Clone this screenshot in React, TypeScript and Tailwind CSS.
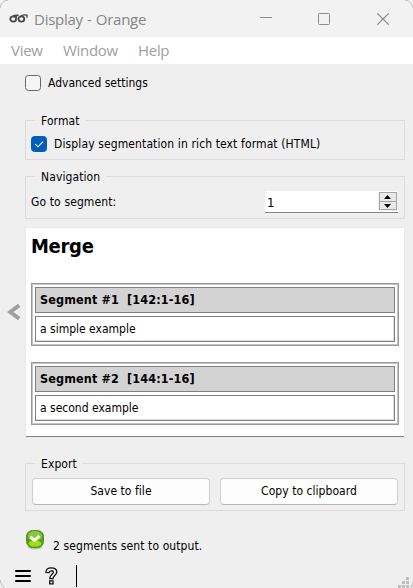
import type { ReactNode } from "react";

function TitleBar() {
  return (
    <header className="flex h-[37px] shrink-0 items-center bg-[#f2f2f2] pl-[9px] pr-[24px]">
      <svg width="20" height="12" viewBox="0 0 20 12" fill="none" stroke="#4a4a4a" strokeWidth="1.8">
        <ellipse cx="4.2" cy="6" rx="2.9" ry="2.7" />
        <ellipse cx="12.4" cy="6" rx="2.9" ry="2.7" />
        <path d="M4 2.9C6 1.9 8 2.4 9.6 2.2M12 2.9C14 1.9 16 1.6 18.6 2.2M18 2.2V4.8M7.4 3V5" strokeWidth="1.4" />
      </svg>
      <h1 className="ml-[5px] w-[112px] whitespace-nowrap font-['Open_Sans',sans-serif] text-[15px] leading-5 tracking-[-0.25px] [word-spacing:0.5px] text-[#858585]">Display - Orange</h1>
      <div className="ml-auto flex items-center">
        <svg width="12" height="12" stroke="#8c8c8c"><path d="M0 4.5H12" /></svg>
        <svg className="ml-[46px]" width="12" height="12" fill="none" stroke="#8c8c8c"><rect x=".5" y=".5" width="11" height="11" rx=".8" /></svg>
        <svg className="ml-[47px]" width="12" height="12" fill="none" stroke="#858585" strokeWidth="1.1"><path d="M.3.3 11.7 11.7M11.7.3.3 11.7" /></svg>
      </div>
    </header>
  );
}

function MenuBar() {
  return (
    <nav className="flex h-[27px] shrink-0 items-center bg-white pl-[11px] font-['Open_Sans',sans-serif] text-[15px] tracking-[-0.3px] text-[#a0a0a0]">
      <span className="w-[52px]">View</span>
      <span className="w-[75px]">Window</span>
      <span>Help</span>
    </nav>
  );
}

function CheckBox({ checked }: { checked?: boolean }) {
  return (
    <svg className="shrink-0" width="16" height="16" fill="none">
      <rect x=".5" y=".5" width="15" height="15" rx="3" fill={checked ? "#005fb8" : "#f5f5f5"} stroke={checked ? "#005fb8" : "#666"} />
      {checked && <path d="M4.3 8.2 7 10.8 12 5.7" stroke="#fff" strokeWidth="1.1" />}
    </svg>
  );
}

function Group({ title, className, children }: { title: string; className: string; children: ReactNode }) {
  return (
    <section className={`flex w-[380px] shrink-0 border border-[#dcdcdc] ${className}`}>
      <h2 className="-mt-[8px] ml-[9px] h-4 w-0 whitespace-nowrap leading-4 tracking-[0.1px]">
        <span className="inline-block bg-[#efefef] px-[6px]">{title}</span>
      </h2>
      <div className="-ml-[9px] flex w-[378px] min-w-0">{children}</div>
    </section>
  );
}

function Segment({ title, text }: { title: string; text: string }) {
  return (
    <article className="flex h-[63px] w-[368px] flex-col gap-[3px] border border-[#999] p-[3px] shadow-[inset_0_0_0_1px_#c4c4c4]">
      <h4 className="h-[26px] whitespace-pre border border-[#808080] bg-[#d3d3d3] pl-1 text-[12.5px] font-bold leading-[24px] tracking-[0.13px]">{title}</h4>
      <p className="h-[26px] border border-[#808080] pl-1 leading-[24px] shadow-[inset_-1px_-1px_0_#dedede]">{text}</p>
    </article>
  );
}

function SpinBox() {
  return (
    <div className="ml-auto mr-[6px] mt-[14px] flex h-[22px] w-[133px] border-b border-[#858585] bg-white pl-[2px] text-[13px] leading-[23px]">
      <span>1</span>
      <svg className="ml-auto mt-px" width="20" height="19" viewBox="0 0 20 19">
        <path d="M0-1H20V20H0Z" fill="#f2f2f2" />
        <g fill="#e9e9e9" stroke="#a5a5a5"><rect x="1.5" y=".5" width="17" height="9" /><rect x="1.5" y="9.5" width="17" height="8" /></g>
        <path d="M6 7 9.5 3 13 7ZM6 12 9.5 16 13 12Z" fill="#000" />
      </svg>
    </div>
  );
}

function PushButton({ children }: { children: ReactNode }) {
  return <button className="h-[27px] w-[178px] rounded-[4px] border border-[#d0d0d0] border-b-[#b8b8b8] bg-[#fdfdfd] leading-[25px] tracking-[0.05px]">{children}</button>;
}

export default function App() {
  return (
    <div className="relative flex h-[588px] w-[413px] flex-col overflow-hidden bg-[#efefef] font-['DejaVu_Sans_Condensed','DejaVu_Sans',sans-serif] text-[12px] text-black">
      <TitleBar />
      <MenuBar />
      <div className="flex h-[458px] shrink-0">
        <aside className="flex w-[25px] shrink-0 items-start pl-[7px] pt-[239px]">
          <svg width="14" height="18" fill="none" stroke="#a0a0a0" strokeWidth="4"><path d="M12.2 2.3 3.2 9 12.2 15.7" /></svg>
        </aside>
        <main className="flex flex-col pt-[11px]">
          <label className="flex h-4 items-center gap-[7px]">
            <CheckBox />
            <span>Advanced settings</span>
          </label>
          <Group title="Format" className="mt-[29px] h-[40px]">
            <label className="flex items-start gap-[7px] pl-[5px] pt-[15px] leading-4"><CheckBox checked /><span className="tracking-[0.12px]">Display segmentation in rich text format (HTML)</span></label>
          </Group>
          <Group title="Navigation" className="mt-[16px] h-[43px]">
            <span className="pl-[5px] pt-[16px] leading-[18px] tracking-[0.12px]">Go to segment:</span>
            <SpinBox />
          </Group>
          <section className="ml-px mt-[9px] h-[209px] w-[378px] border-b border-[#858585] bg-white pl-[5px] shadow-[0_0_0_1px_#e9e9e9]">
            <h3 className="h-[55px] pt-[5px] text-[20px] font-bold leading-[26px] tracking-[-0.3px]">Merge</h3>
            <div className="flex flex-col gap-4">
              <Segment title="Segment #1  [142:1-16]" text="a simple example" />
              <Segment title="Segment #2  [144:1-16]" text="a second example" />
            </div>
          </section>
          <Group title="Export" className="mt-[26px] h-[48px]">
            <div className="flex gap-[10px] pl-[6px] pt-[14px]">
              <PushButton>Save to file</PushButton>
              <PushButton>Copy to clipboard</PushButton>
            </div>
          </Group>
        </main>
      </div>
      <div className="flex h-[43px] shrink-0 pl-[26px] pt-[8px]">
        <svg width="18" height="20" viewBox="0 0 18 20">
          <ellipse cx="9" cy="17" rx="7" ry="2.5" fill="#bbb" />
          <rect x=".5" y=".5" width="17" height="17" rx="6" fill="#55a016" stroke="#539127" />
          <ellipse cx="9" cy="6" rx="7" ry="5" fill="#8cc640" />
          <ellipse cx="9" cy="13.4" rx="6.4" ry="3.2" fill="#a0df08" />
          <path d="m4.3 7 4.2 3.3 4.8-4.3" fill="none" stroke="#fff" strokeWidth="3" />
        </svg>
        <p className="ml-[9px] pt-[8px] leading-4 tracking-[0.1px]">2 segments sent to output.</p>
      </div>
      <footer className="flex h-[23px] shrink-0 pl-[15px]">
        <svg className="mt-[4px]" width="16" height="14" stroke="#000" strokeWidth="2" strokeLinecap="round"><path d="M1 2H15M1 7H15M1 12H15" /></svg>
        <svg className="ml-[14px] mt-[2px]" width="13" height="18" fill="#efefef" stroke="#111" strokeWidth="1.3">
          <path d="M.9 5.3C.9 2.2 3 .8 6.2.8 9.6.8 11.8 2.3 11.8 5 11.8 8 8.2 8.3 8 11.6H4.8C4.7 7.5 8.4 7.3 8.4 5.1 8.4 3.3 4.3 3.2 4.1 5.6ZM4.7 13.8H8V16.8H4.7Z" />
        </svg>
        <div className="ml-[18px] h-[22px] w-px bg-black" />
        <svg className="ml-auto mt-[12px]" width="15" height="11" fill="#bdbdbd">
          <path d="M8 0h3v3H8ZM4 4h3v3H4ZM8 4h3v3H8ZM0 8h3v3H0ZM4 8h3v3H4ZM8 8h3v3H8Z" />
          <path d="M16 4 13 11" stroke="#bdbdbd" strokeWidth="1.2" />
        </svg>
      </footer>
      <svg className="pointer-events-none absolute inset-0" width="413" height="588" fill="none" stroke="#bcbcbc">
        <path d="M0 8Q1 1 8 0M405 0Q412 1 413 8M0 580Q1 585 4 588" />
      </svg>
    </div>
  );
}
